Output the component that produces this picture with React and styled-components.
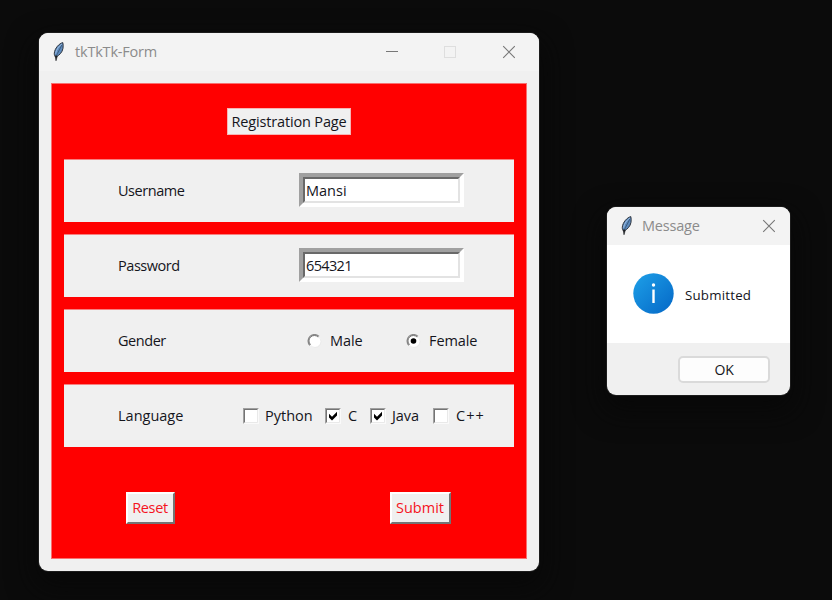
import React from 'react';
import styled, { createGlobalStyle } from 'styled-components';

const GlobalStyle = createGlobalStyle`
  * { box-sizing: border-box; }
  body { margin: 0; background: #0b0b0b; }
`;

const Desktop = styled.main`
  display: flex;
  align-items: flex-start;
  gap: 68px;
  width: 832px;
  height: 600px;
  padding: 33px 0 0 39px;
  overflow: hidden;
  background: #0b0b0b;
  color: #15151c;
  font: 14.5px/20px 'Open Sans', 'Noto Sans', sans-serif;
  letter-spacing: -0.15px;
  white-space: nowrap;
`;

const Window = styled.section`
  display: flex;
  flex-direction: column;
  flex: none;
  width: ${(p) => p.$width}px;
  height: ${(p) => p.$height}px;
  margin-top: ${(p) => p.$drop || 0}px;
  overflow: hidden;
  border-radius: 9px;
  background: #f0f0f0;
  box-shadow: 0 0 0 1px #1c1c1c, 0 12px 28px 4px #080808;
`;

const TitleBar = styled.header`
  display: flex;
  align-items: center;
  flex: none;
  height: 38px;
  padding: 0 ${(p) => (p.$compact ? 14 : 23)}px 0 13px;
  background: #f3f3f3;
`;

const Title = styled.h1`
  flex: 1;
  margin: 0 0 0 ${(p) => (p.$compact ? 8 : 9)}px;
  color: #8b8b8b;
  font: inherit;
  letter-spacing: -0.2px;
`;

const Controls = styled.div`
  display: flex;
  align-items: center;
  gap: 45px;
`;

const Form = styled.form`
  display: flex;
  flex-direction: column;
  align-items: center;
  width: 476px;
  height: 476px;
  margin: 12px 0 0 12px;
  border: 1px solid #f87070;
  background: #ff0000;
`;

const Heading = styled.h2`
  display: flex;
  align-items: center;
  justify-content: center;
  width: 124px;
  height: 27px;
  margin: 24px 0 24px;
  border: 1px solid #f7b4b4;
  background: #f0f0f0;
  font: inherit;
  letter-spacing: -0.15px;
`;

const Rows = styled.div`
  display: flex;
  flex-direction: column;
  gap: 12px;
`;

const Row = styled.div`
  display: flex;
  align-items: center;
  width: 450px;
  height: 63px;
  padding-left: 54px;
  border-top: 1px solid #f78080;
  background: #f0f0f0;
`;

const FieldLabel = styled.span`
  flex: none;
  width: ${(p) => p.$width}px;
  letter-spacing: ${(p) => p.$tracking ?? -0.45}px;
`;

const EntryFrame = styled.div`
  width: 165px;
  height: 34px;
  margin-bottom: 2px;
  border: 4px solid;
  border-color: #a0a0a0 #ffffff #ffffff #a0a0a0;
`;

const Entry = styled.input`
  display: block;
  width: 157px;
  height: 26px;
  padding: 0 0 0 1px;
  border: 2px solid;
  border-color: #696969 #e3e3e3 #e3e3e3 #696969;
  border-radius: 0;
  outline: none;
  background: #ffffff;
  color: inherit;
  font: inherit;
  letter-spacing: ${(p) => p.$tracking || 0}px;
`;

const Choice = styled.label`
  display: flex;
  align-items: center;
  flex: none;
  gap: ${(p) => p.$gap}px;
  width: ${(p) => p.$width}px;
  letter-spacing: ${(p) => p.$tracking ?? -0.1}px;
`;

const Glyph = styled.svg`
  display: block;
  flex: none;
`;

const Actions = styled.div`
  display: flex;
  justify-content: space-between;
  width: 325px;
  margin: 45px 2px 0 0;
`;

const PushButton = styled.button`
  width: ${(p) => p.$width}px;
  height: 32px;
  padding: 0;
  border: 2px solid;
  border-color: #ffffff #747474 #747474 #ffffff;
  border-radius: 0;
  background: #f0f0f0;
  color: #f5141e;
  font: inherit;
  letter-spacing: ${(p) => p.$tracking || 0}px;
`;

const MessageBody = styled.div`
  display: flex;
  align-items: center;
  flex: none;
  gap: 11px;
  height: 98px;
  padding: 0 0 2px 26px;
  background: #ffffff;
`;

const MessageText = styled.span`
  padding-top: 3px;
  font-size: 13.3px;
  font-weight: 500;
  letter-spacing: 0.2px;
`;

const MessageFooter = styled.footer`
  display: flex;
  justify-content: flex-end;
  padding: 13px 20px 0 0;
`;

const OkButton = styled.button`
  width: 92px;
  height: 27px;
  padding: 0;
  border: 2px solid #dadada;
  border-radius: 5px;
  background: #fdfdfd;
  color: inherit;
  font: inherit;
  font-size: 14px;
  letter-spacing: -0.2px;
`;

function Feather() {
  return (
    <Glyph width="14" height="22" viewBox="0 0 14 22">
      <path d="M10.800 1.600C7 2.600 2.800 7.200 2.300 12.200c-.1 1.500.3 2.800 1.400 3.900 3.600-1.700 6.600-4.600 7.300-8.800.3-2.200.2-4.200-.2-5.700Z" fill="#5d8abd" stroke="#30353d" strokeWidth="1" />
      <path d="M9.900 3C7 5 4.200 8.500 3.600 12.700" fill="none" stroke="#9cbde2" strokeWidth="1" />
      <path d="M9.800 4C8 8 5.500 12 4.300 15" fill="none" stroke="#34506f" strokeWidth=".8" />
      <path d="M3.200 14.800 4 19.800 5.300 15.200Z" fill="#1d2024" stroke="#1d2024" strokeWidth=".6" />
    </Glyph>
  );
}

function CloseIcon() {
  return (
    <Glyph width="14" height="14" viewBox="0 0 14 14">
      <path d="M1.200 1.200 12.800 12.800M12.800 1.200 1.200 12.800" stroke="#777" strokeWidth="1.100" />
    </Glyph>
  );
}

function MinimizeIcon() {
  return (
    <Glyph width="14" height="14" viewBox="0 0 14 14">
      <path d="M2 6.500H14" stroke="#777" strokeWidth="1" />
    </Glyph>
  );
}

function MaximizeIcon() {
  return (
    <Glyph width="14" height="14" viewBox="0 0 14 14">
      <rect x="1.500" y="1.500" width="11" height="11" fill="none" stroke="#dedede" />
    </Glyph>
  );
}

function Checkbox({ checked }) {
  return (
    <Glyph width="16" height="16" viewBox="0 0 16 16">
      <path d="M0 0H16V16H0Z" fill="#fafafa" />
      <path d="M2 2H14V14H2Z" fill="#fff" />
      <path d="M0 16V0H16L15 1H1V15Z" fill="#a0a0a0" />
      <path d="M1 15V1H15L14 2H2V14Z" fill="#747474" />
      <path d="M2 14.500H14.500V2" fill="none" stroke="#e9e9e9" />
      {checked && <path d="M4 5.700 7 8.700 12 3.700V7.500L7 12.500 4 9.500Z" fill="#000" />}
    </Glyph>
  );
}

function Radio({ checked }) {
  return (
    <Glyph width="15" height="15" viewBox="0 0 15 15">
      <circle cx="7.500" cy="7" r="6.200" fill="#fff" stroke="#fff" />
      <path d="M2.900 11.400A6.400 6.400 0 0 1 12 2.400" fill="none" stroke="#8a8a8a" strokeWidth="1.300" />
      <path d="M3.600 10.700A5.300 5.300 0 0 1 11.200 3.100" fill="none" stroke="#5f5f5f" strokeWidth=".8" />
      <path d="M12.200 3.300A5.900 5.900 0 0 1 3.800 11.700" fill="none" stroke="#e6e6e6" strokeWidth=".8" />
      {checked && <circle cx="7.500" cy="7" r="2.800" fill="#000" />}
    </Glyph>
  );
}

function InfoIcon() {
  return (
    <Glyph width="41" height="41" viewBox="0 0 41 41">
      <defs>
        <linearGradient id="info" x1="0" y1="0" x2="1" y2="1">
          <stop offset="0" stopColor="#1ea0e8" />
          <stop offset="1" stopColor="#0467c6" />
        </linearGradient>
      </defs>
      <circle cx="20.500" cy="20.500" r="20.200" fill="url(#info)" />
      <circle cx="20.500" cy="12" r="1.700" fill="#fff" />
      <path d="M20.500 16.500V30" stroke="#fff" strokeWidth="2.400" />
    </Glyph>
  );
}

export default function App() {
  return (
    <>
      <GlobalStyle />
      <Desktop>
        <Window $width={500} $height={538}>
          <TitleBar>
            <Feather />
            <Title>tkTkTk-Form</Title>
            <Controls>
              <MinimizeIcon />
              <MaximizeIcon />
              <CloseIcon />
            </Controls>
          </TitleBar>
          <Form onSubmit={(e) => e.preventDefault()}>
            <Heading>Registration Page</Heading>
            <Rows>
              <Row>
                <FieldLabel $width={181}>Username</FieldLabel>
                <EntryFrame><Entry defaultValue="Mansi" /></EntryFrame>
              </Row>
              <Row>
                <FieldLabel $width={181}>Password</FieldLabel>
                <EntryFrame><Entry defaultValue="654321" $tracking={-0.65} /></EntryFrame>
              </Row>
              <Row>
                <FieldLabel $width={189}>Gender</FieldLabel>
                <Choice $width={99} $gap={8}><Radio />Male</Choice>
                <Choice $width={90} $gap={8}><Radio checked />Female</Choice>
              </Row>
              <Row>
                <FieldLabel $width={125} $tracking={0}>Language</FieldLabel>
                <Choice $width={82} $gap={6} $tracking={0}><Checkbox />Python</Choice>
                <Choice $width={45} $gap={7}><Checkbox checked />C</Choice>
                <Choice $width={63} $gap={6}><Checkbox checked />Java</Choice>
                <Choice $width={60} $gap={7} $tracking={1}><Checkbox />C++</Choice>
              </Row>
            </Rows>
            <Actions>
              <PushButton type="button" $width={49} $tracking={-0.35}>Reset</PushButton>
              <PushButton type="submit" $width={61}>Submit</PushButton>
            </Actions>
          </Form>
        </Window>
        <Window $width={183} $height={188} $drop={174}>
          <TitleBar $compact>
            <Feather />
            <Title $compact>Message</Title>
            <CloseIcon />
          </TitleBar>
          <MessageBody>
            <InfoIcon />
            <MessageText>Submitted</MessageText>
          </MessageBody>
          <MessageFooter>
            <OkButton type="button">OK</OkButton>
          </MessageFooter>
        </Window>
      </Desktop>
    </>
  );
}
